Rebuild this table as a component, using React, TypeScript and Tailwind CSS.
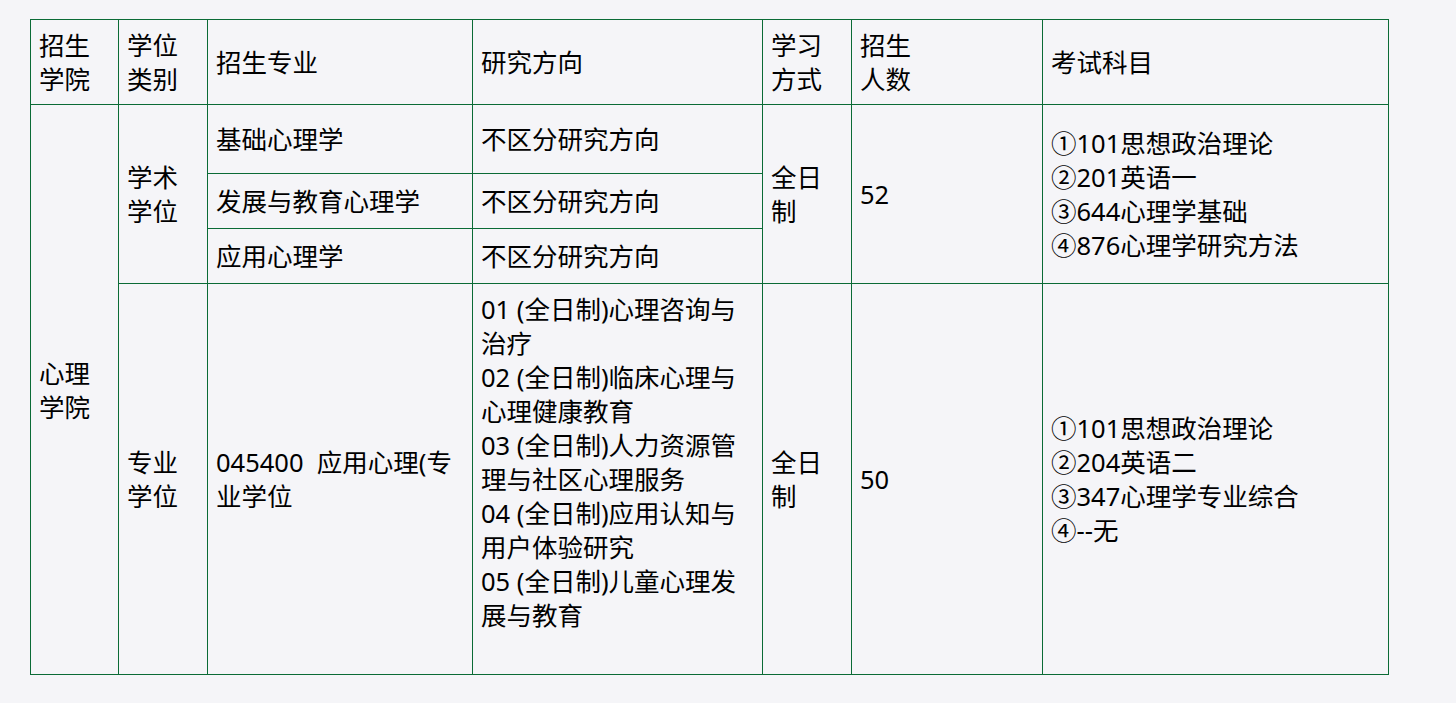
import React from 'react';

const cell = 'border border-[#0b6b36] px-2 align-middle';

export default function App() {
  return (
    <div className="min-h-screen bg-[#f5f5f8] pt-[19px] pl-[30px] text-[25.5px] leading-[34px] text-black [font-family:'Noto_Sans','Noto_Sans_CJK_SC',sans-serif]">
      <table className="table-fixed border-collapse w-[1359px]">
        <colgroup>
          <col className="w-[88px]" />
          <col className="w-[89px]" />
          <col className="w-[265px]" />
          <col className="w-[290px]" />
          <col className="w-[89px]" />
          <col className="w-[191px]" />
          <col className="w-[346px]" />
        </colgroup>
        <tbody>
          <tr className="h-[85px]">
            <td className={cell}>招生<br />学院</td>
            <td className={cell}>学位<br />类别</td>
            <td className={cell}>招生专业</td>
            <td className={cell}>研究方向</td>
            <td className={cell}>学习<br />方式</td>
            <td className={cell}>招生<br />人数</td>
            <td className={cell}>考试科目</td>
          </tr>
          <tr className="h-[69px]">
            <td className={cell} rowSpan={4}>心理<br />学院</td>
            <td className={cell} rowSpan={3}>学术<br />学位</td>
            <td className={cell}>基础心理学</td>
            <td className={cell}>不区分研究方向</td>
            <td className={cell} rowSpan={3}>全日<br />制</td>
            <td className={cell} rowSpan={3}>52</td>
            <td className={cell} rowSpan={3}>
              ①101思想政治理论<br />
              ②201英语一<br />
              ③644心理学基础<br />
              ④876心理学研究方法
            </td>
          </tr>
          <tr className="h-[55px]">
            <td className={cell}>发展与教育心理学</td>
            <td className={cell}>不区分研究方向</td>
          </tr>
          <tr className="h-[55px]">
            <td className={cell}>应用心理学</td>
            <td className={cell}>不区分研究方向</td>
          </tr>
          <tr className="h-[391px]">
            <td className={cell}>专业<br />学位</td>
            <td className={cell}>045400&nbsp; 应用心理(专业学位</td>
            <td className={cell}>
              01 (全日制)心理咨询与治疗<br />
              02 (全日制)临床心理与心理健康教育<br />
              03 (全日制)人力资源管理与社区心理服务<br />
              04 (全日制)应用认知与用户体验研究<br />
              05 (全日制)儿童心理发展与教育<br />
              &nbsp;
            </td>
            <td className={cell}>全日<br />制</td>
            <td className={cell}>50</td>
            <td className={cell}>
              ①101思想政治理论<br />
              ②204英语二<br />
              ③347心理学专业综合<br />
              ④--无
            </td>
          </tr>
        </tbody>
      </table>
    </div>
  );
}
